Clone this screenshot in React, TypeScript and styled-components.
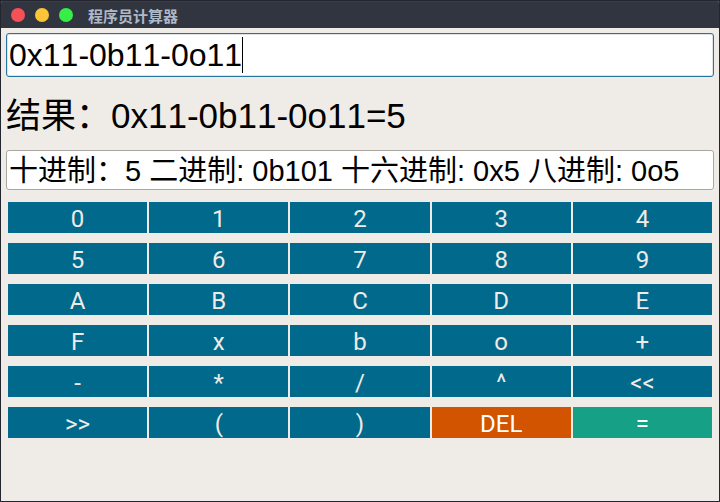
import React, { useLayoutEffect, useRef, useState } from "react";
import styled, { createGlobalStyle } from "styled-components";

const GlobalStyle = createGlobalStyle`
  * { box-sizing: border-box; }
  body {
    margin: 0;
    background: #1d2026;
    font-family: "Liberation Sans", "Noto Sans CJK SC", sans-serif;
    font-kerning: none;
  }
`;

const Window = styled.main`
  min-height: 100vh;
  display: flex;
  flex-direction: column;
  border: 1px solid #23262e;
  border-radius: 3px 3px 0 0;
  background: #efebe6;
  overflow: hidden;
`;

const TitleBar = styled.header`
  height: 27px;
  flex: none;
  display: flex;
  align-items: center;
  gap: 15px;
  padding: 0 10px 1px;
  background: #31353f;
  border-top: 1px solid #3a3e48;
`;

const WindowControls = styled.div`
  display: flex;
  gap: 10px;
`;

const WindowButton = styled.button<{ $color: string }>`
  width: 14px;
  height: 14px;
  padding: 0;
  border: 0;
  border-radius: 50%;
  background: ${(p) => p.$color};
`;

const Title = styled.h1`
  margin: 0;
  padding-top: 2px;
  font: 700 15px/22px "Noto Sans CJK SC", sans-serif;
  color: #afb8c6;
`;

const Content = styled.div`
  display: flex;
  flex-direction: column;
  padding: 5px;
`;

const Entry = styled.div`
  position: relative;
  display: flex;
`;

const Field = styled.input`
  width: 100%;
  min-width: 0;
  border-radius: 3px;
  background: #fff;
  color: #000;
  font-family: inherit;
  font-kerning: none;
  outline: none;
`;

const ExpressionField = styled(Field)`
  height: 44px;
  padding: 0 2px;
  border: 1px solid #2574a0;
  box-shadow: inset 0 0 0 1px #dde5ea;
  font-size: 32px;
  caret-color: transparent;
`;

const Caret = styled.span`
  position: absolute;
  top: 4px;
  width: 1px;
  height: 36px;
  background: #000;
  pointer-events: none;
`;

const Result = styled.output`
  display: block;
  margin: 12px 0 8px;
  font-size: 35px;
  line-height: 53px;
  color: #000;
`;

const ConversionField = styled(Field)`
  height: 40px;
  padding: 0 2px 4px;
  border: 1px solid #aaa7a3;
  font-size: 29px;
`;

const Keypad = styled.div`
  display: grid;
  grid-template-columns: repeat(5, 1fr);
  gap: 10px 2px;
  padding: 12px 2px 0;
`;

const keyColors = { plain: "#00698c", remove: "#d35400", equals: "#16a085" };

const Key = styled.button<{ $kind: keyof typeof keyColors }>`
  height: 31px;
  padding: 2px 0 0;
  border: 0;
  background: ${(p) => keyColors[p.$kind]};
  color: ${(p) => (p.$kind === "plain" ? "#efebe6" : "#fff")};
  font: 400 24px/28px Roboto, sans-serif;
`;

const KEYS = [
  "0", "1", "2", "3", "4",
  "5", "6", "7", "8", "9",
  "A", "B", "C", "D", "E",
  "F", "x", "b", "o", "+",
  "-", "*", "/", "^", "<<",
  ">>", "(", ")", "DEL", "=",
];

const kindOf = (key: string): keyof typeof keyColors =>
  key === "DEL" ? "remove" : key === "=" ? "equals" : "plain";

export default function App() {
  const [expression, setExpression] = useState("0x11-0b11-0o11");
  const [caretX, setCaretX] = useState(0);
  const field = useRef<HTMLInputElement>(null);

  useLayoutEffect(() => {
    const ctx = document.createElement("canvas").getContext("2d");
    if (!ctx || !field.current) return;
    const style = getComputedStyle(field.current);
    ctx.font = `${style.fontSize} ${style.fontFamily}`;
    ctx.fontKerning = "none";
    setCaretX(Math.round(ctx.measureText(expression).width) + 3);
  }, [expression]);

  const press = (key: string) => {
    if (key === "DEL") setExpression((e) => e.slice(0, -1));
    else if (key !== "=") setExpression((e) => e + key);
  };

  return (
    <>
      <GlobalStyle />
      <Window>
        <TitleBar>
          <WindowControls>
            <WindowButton $color="#f55157" aria-label="关闭" />
            <WindowButton $color="#fcc537" aria-label="最小化" />
            <WindowButton $color="#37ed48" aria-label="最大化" />
          </WindowControls>
          <Title>程序员计算器</Title>
        </TitleBar>
        <Content>
          <Entry>
            <ExpressionField
              ref={field}
              aria-label="表达式"
              value={expression}
              onChange={(e) => setExpression(e.target.value)}
            />
            <Caret style={{ left: caretX }} />
          </Entry>
          <Result>结果：0x11-0b11-0o11=5</Result>
          <ConversionField
            aria-label="进制转换"
            readOnly
            value="十进制：5 二进制: 0b101 十六进制: 0x5 八进制: 0o5"
          />
          <Keypad>
            {KEYS.map((key) => (
              <Key key={key} type="button" $kind={kindOf(key)} onClick={() => press(key)}>
                {key}
              </Key>
            ))}
          </Keypad>
        </Content>
      </Window>
    </>
  );
}
